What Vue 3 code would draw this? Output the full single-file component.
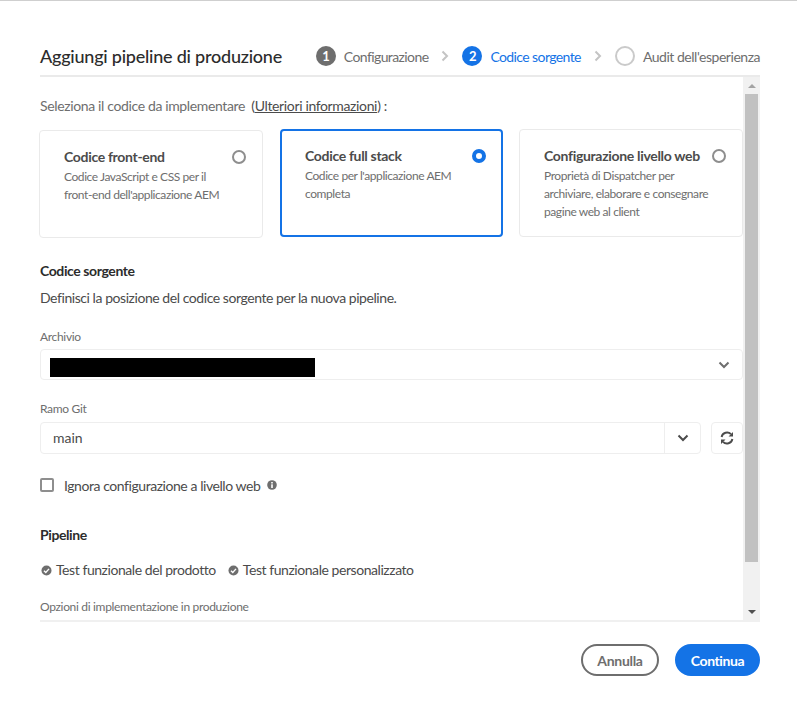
<template>
  <div class="dialog">
    <header class="head">
      <h1 class="title">Aggiungi pipeline di produzione</h1>
      <ol class="steps">
        <template v-for="(step, index) in steps" :key="step.label">
          <li :class="['step', step.state]">
            <span class="bullet">{{ step.state === 'todo' ? '' : index + 1 }}</span>
            <span class="step-label">{{ step.label }}</span>
          </li>
          <li v-if="index < steps.length - 1" class="sep">
            <svg width="8" height="12" viewBox="0 0 8 12"><path d="M1.500 1.500 6 6l-4.500 4.500" fill="none" stroke="#c4c4c4" stroke-width="2" /></svg>
          </li>
        </template>
      </ol>
    </header>

    <div class="body">
      <div class="pane">
        <p class="intro">Seleziona il codice da implementare <span class="paren">(<a class="more">Ulteriori informazioni</a>) :</span></p>

        <div class="cards">
          <div
            v-for="card in cards"
            :key="card.title"
            :class="['card', { selected: card.title === selected }, card.cls]"
          >
            <div class="card-top">
              <strong class="card-title">{{ card.title }}</strong>
              <span class="radio"></span>
            </div>
            <p class="card-text">{{ card.text }}</p>
          </div>
        </div>

        <h2 class="section source">Codice sorgente</h2>
        <p class="desc">Definisci la posizione del codice sorgente per la nuova pipeline.</p>

        <label class="field-label repo-label">Archivio</label>
        <div class="select">
          <span class="redacted"></span>
          <svg class="chev" width="12" height="8" viewBox="0 0 12 8"><path d="M1.500 1.500 6 6l4.500-4.500" fill="none" stroke="#6e6e6e" stroke-width="2" /></svg>
        </div>

        <label class="field-label branch-label">Ramo Git</label>
        <div class="branch-row">
          <div class="combo">
            <span class="combo-value">main</span>
            <span class="combo-btn">
              <svg width="12" height="8" viewBox="0 0 12 8"><path d="M1.500 1.500 6 6l4.500-4.500" fill="none" stroke="#4b4b4b" stroke-width="2" /></svg>
            </span>
          </div>
          <button class="refresh">
            <svg width="14" height="14" viewBox="0 0 14 14" fill="none">
              <path d="M1.600 6A5.500 5.500 0 0 1 11 3.200" stroke="#4b4b4b" stroke-width="1.900" />
              <path d="M12.400 8A5.500 5.500 0 0 1 3 10.800" stroke="#4b4b4b" stroke-width="1.900" />
              <path d="M13 1v4.500H8.500zM1 13V8.500h4.500z" fill="#4b4b4b" />
            </svg>
          </button>
        </div>

        <div class="check-row">
          <span class="checkbox"></span>
          <span class="check-label">Ignora configurazione a livello web</span>
          <svg class="info" width="10" height="10" viewBox="0 0 10 10">
            <circle cx="5" cy="5" r="4.800" fill="#6e6e6e" />
            <rect x="4.200" y="4.300" width="1.600" height="3.700" fill="#fff" />
            <rect x="4.200" y="2" width="1.600" height="1.500" fill="#fff" />
          </svg>
        </div>

        <h2 class="section pipeline">Pipeline</h2>
        <div class="tests">
          <span v-for="test in tests" :key="test" class="test">
            <svg width="11" height="11" viewBox="0 0 11 11">
              <circle cx="5.500" cy="5.500" r="5" fill="#6e6e6e" />
              <path d="M3 5.700 4.800 7.500 8 3.900" fill="none" stroke="#fff" stroke-width="1.400" />
            </svg>
            {{ test }}
          </span>
        </div>
        <label class="field-label options-label">Opzioni di implementazione in produzione</label>
      </div>

      <div class="scrollbar">
        <span class="arrow up"></span>
        <span class="thumb"></span>
        <span class="arrow down"></span>
      </div>
    </div>

    <footer class="foot">
      <button class="btn cancel">Annulla</button>
      <button class="btn go">Continua</button>
    </footer>
  </div>
</template>

<script setup>
const steps = [
  { label: 'Configurazione', state: 'done' },
  { label: 'Codice sorgente', state: 'active' },
  { label: "Audit dell'esperienza", state: 'todo' }
]

const selected = 'Codice full stack'

const cards = [
  { title: 'Codice front-end', text: "Codice JavaScript e CSS per il front-end dell'applicazione AEM", cls: 'first' },
  { title: 'Codice full stack', text: "Codice per l'applicazione AEM completa" },
  { title: 'Configurazione livello web', text: 'Proprietà di Dispatcher per archiviare, elaborare e consegnare pagine web al client', cls: 'last' }
]

const tests = ['Test funzionale del prodotto', 'Test funzionale personalizzato']
</script>

<style>
html, body {
  margin: 0;
  background: #fff;
}
</style>

<style scoped>
.dialog {
  box-sizing: border-box;
  height: 717px;
  padding: 36px 37px 0 40px;
  border-top: 1px solid #cfcfcf;
  font-family: Lato, "Noto Sans", sans-serif;
  letter-spacing: -0.44px;
  color: #4b4b4b;
  background: #fff;
}
.head {
  display: flex;
  align-items: center;
  justify-content: space-between;
  height: 38px;
  border-bottom: 2px solid #eaeaea;
  white-space: nowrap;
}
.title {
  margin: 0;
  font-size: 18px;
  font-weight: 500;
  letter-spacing: -0.23px;
  color: #2c2c2c;
}
.steps {
  display: flex;
  align-items: center;
  margin: 0;
  padding: 0;
  list-style: none;
  font-size: 14px;
  letter-spacing: -0.6px;
  color: #6e6e6e;
}
.step {
  display: flex;
  align-items: center;
  gap: 8px;
}
.step.todo {
  letter-spacing: -0.47px;
}
.bullet {
  box-sizing: border-box;
  display: flex;
  align-items: center;
  justify-content: center;
  width: 20px;
  height: 20px;
  border-radius: 50%;
  font-size: 13px;
  font-weight: 700;
  color: #fff;
  background: #6e6e6e;
}
.step.active .bullet {
  background: #1473e6;
}
.step.active .step-label {
  color: #1473e6;
}
.step.todo .bullet {
  background: none;
  border: 2px solid #cacaca;
}
.sep {
  display: flex;
  margin: 0 13px;
}
.body {
  display: flex;
  box-sizing: border-box;
  height: 545px;
  border-bottom: 2px solid #f0f0f0;
}
.pane {
  flex: 1;
  min-width: 0;
  margin-left: -1px;
  padding-left: 1px;
  overflow: hidden;
}
.scrollbar {
  flex: 0 0 17px;
  display: flex;
  flex-direction: column;
  align-items: center;
  background: #f1f1f1;
}
.thumb {
  width: 13px;
  height: 468px;
  background: #c1c1c1;
}
.arrow {
  width: 0;
  height: 0;
  border-left: 4px solid transparent;
  border-right: 4px solid transparent;
}
.arrow.up {
  margin: 7px 0 6px;
  border-bottom: 4px solid #a3a3a3;
}
.arrow.down {
  margin-top: 48px;
  border-top: 4px solid #505050;
}
.intro {
  margin: 20px 0 0;
  font-size: 14px;
  line-height: 18px;
  letter-spacing: -0.36px;
  color: #6e6e6e;
}
.paren {
  margin-left: 3px;
  color: #4b4b4b;
}
.more {
  text-decoration: underline;
}
.cards {
  display: flex;
  gap: 16px;
  margin-top: 14px;
}
.card {
  box-sizing: border-box;
  flex: 0 0 223px;
  height: 108px;
  padding: 17px 16px 0 24px;
  border: 1px solid #eaeaea;
  border-radius: 4px;
}
.card.first {
  flex-basis: 224px;
  margin: 1px 1px -1px -1px;
}
.card.last {
  flex-basis: 224px;
}
.card.selected {
  padding: 16px 15px 0 23px;
  border: 2px solid #1473e6;
}
.card-top {
  display: flex;
  align-items: center;
  justify-content: space-between;
}
.card-title {
  font-size: 14px;
  font-weight: 700;
  letter-spacing: -0.32px;
  color: #4b4b4b;
}
.radio {
  box-sizing: border-box;
  width: 14px;
  height: 14px;
  border: 2px solid #8e8e8e;
  border-radius: 50%;
}
.selected .radio {
  border: 4px solid #1473e6;
}
.card-text {
  margin: 3px 0 0;
  max-width: 172px;
  font-size: 12px;
  line-height: 18px;
  letter-spacing: -0.42px;
  color: #6e6e6e;
}
.section {
  margin: 0;
  font-size: 14px;
  line-height: 18px;
  font-weight: 700;
  letter-spacing: -0.4px;
  color: #2c2c2c;
}
.source {
  margin-top: 25px;
}
.desc {
  margin: 9px 0 0;
  font-size: 14px;
  line-height: 18px;
  color: #4b4b4b;
}
.field-label {
  display: block;
  font-size: 12px;
  line-height: 16px;
  letter-spacing: -0.32px;
  color: #6e6e6e;
}
.repo-label {
  margin-top: 22px;
}
.select {
  box-sizing: border-box;
  display: flex;
  align-items: center;
  justify-content: space-between;
  width: 703px;
  height: 31px;
  margin-top: 4px;
  padding: 0 12px 0 9px;
  border: 1px solid #eeeeee;
  border-radius: 4px;
}
.redacted {
  width: 265px;
  height: 19px;
  margin-top: 6px;
  background: #000;
}
.branch-label {
  margin-top: 21px;
}
.branch-row {
  display: flex;
  gap: 10px;
  margin-top: 5px;
}
.combo {
  box-sizing: border-box;
  flex: 1;
  display: flex;
  align-items: stretch;
  justify-content: space-between;
  height: 32px;
  border: 1px solid #eeeeee;
  border-radius: 4px;
}
.combo-value {
  align-self: center;
  padding: 0 0 2px 12px;
  font-size: 14px;
  letter-spacing: 0;
  color: #4b4b4b;
}
.combo-btn {
  display: flex;
  align-items: center;
  justify-content: center;
  width: 35px;
  border-left: 1px solid #eeeeee;
}
.refresh {
  box-sizing: border-box;
  display: flex;
  align-items: center;
  justify-content: center;
  width: 32px;
  height: 32px;
  padding: 0;
  background: #fff;
  border: 1px solid #eeeeee;
  border-radius: 4px;
}
.check-row {
  display: flex;
  align-items: center;
  margin-top: 22px;
  height: 18px;
  font-size: 14px;
}
.checkbox {
  box-sizing: border-box;
  width: 14px;
  height: 14px;
  margin-right: 10px;
  border: 2px solid #8e8e8e;
  border-radius: 2px;
}
.check-label {
  color: #4b4b4b;
}
.info {
  margin-left: 7px;
}
.pipeline {
  margin-top: 32px;
}
.tests {
  display: flex;
  gap: 12px;
  margin-top: 17px;
  height: 18px;
  margin-left: 1px;
  font-size: 14px;
  line-height: 18px;
}
.test {
  display: flex;
  align-items: center;
  gap: 4px;
  color: #4b4b4b;
}
.options-label {
  margin-top: 20px;
}
.foot {
  display: flex;
  justify-content: flex-end;
  gap: 16px;
  margin-top: 22px;
}
.btn {
  box-sizing: border-box;
  height: 32px;
  border-radius: 16px;
  font-family: inherit;
  font-size: 14px;
  font-weight: 700;
  letter-spacing: -0.3px;
}
.cancel {
  width: 78px;
  background: #fff;
  border: 2px solid #6e6e6e;
  color: #6e6e6e;
}
.go {
  width: 85px;
  background: #1473e6;
  border: 2px solid #1473e6;
  letter-spacing: -0.4px;
  color: #fff;
}
</style>
